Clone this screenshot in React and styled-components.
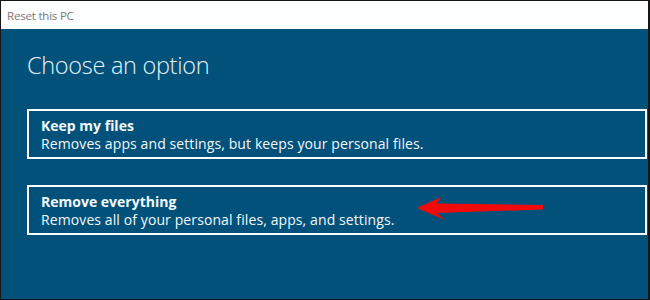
import React from "react";
import styled, { createGlobalStyle } from "styled-components";

const Global = createGlobalStyle`
  html, body { margin: 0; padding: 0; background: #fff; }
  * { box-sizing: border-box; }
`;

const Frame = styled.div`
  width: 650px;
  height: 300px;
  border-style: solid;
  border-color: #161616;
  border-width: 1px 2px 1px 1px;
  display: flex;
  flex-direction: column;
  font-family: "Open Sans", "Noto Sans", sans-serif;
  overflow: hidden;
`;

const TitleBar = styled.div`
  height: 28px;
  flex: none;
  background: #fdfefe;
  color: #7a7a7a;
  font-size: 11.5px;
  display: flex;
  align-items: center;
  padding-left: 6px;
  letter-spacing: -0.2px;
`;

const Body = styled.div`
  flex: 1;
  background: #02517a;
  padding: 20px 1px 0 26px;
  display: flex;
  flex-direction: column;
  position: relative;
`;

const Heading = styled.h1`
  margin: 0 0 28px 0;
  font-size: 23.5px;
  font-weight: 300;
  color: #e6f4fb;
  line-height: 32px;
  letter-spacing: -0.3px;
`;

const Options = styled.div`
  display: flex;
  flex-direction: column;
  gap: 26px;
`;

const Option = styled.div`
  height: 50px;
  flex: none;
  border: 2px solid #ffffff;
  padding: 5px 12px 0 12px;
  color: #f2f9fc;
  display: flex;
  flex-direction: column;
`;

const OptionTitle = styled.div`
  font-weight: 700;
  font-size: 14px;
  line-height: 19px;
  letter-spacing: 0;
`;

const OptionText = styled.div`
  font-size: 14px;
  line-height: 17px;
  letter-spacing: 0.1px;
`;

const Arrow = styled.svg`
  position: absolute;
  left: 0;
  top: 0;
  pointer-events: none;
`;

export default function App() {
  return (
    <>
      <Global />
      <Frame>
        <TitleBar>Reset this PC</TitleBar>
        <Body>
          <Heading>Choose an option</Heading>
          <Options>
            <Option>
              <OptionTitle>Keep my files</OptionTitle>
              <OptionText>Removes apps and settings, but keeps your personal files.</OptionText>
            </Option>
            <Option>
              <OptionTitle>Remove everything</OptionTitle>
              <OptionText>Removes all of your personal files, apps, and settings.</OptionText>
            </Option>
          </Options>
          <Arrow width="647" height="270" viewBox="1 29 647 270">
            <path
              d="M417,208 L441,197 L437,203.5 L543,205 L543,209.5 L437,213 L445,220 Z"
              fill="#f00a0a"
            />
          </Arrow>
        </Body>
      </Frame>
    </>
  );
}
